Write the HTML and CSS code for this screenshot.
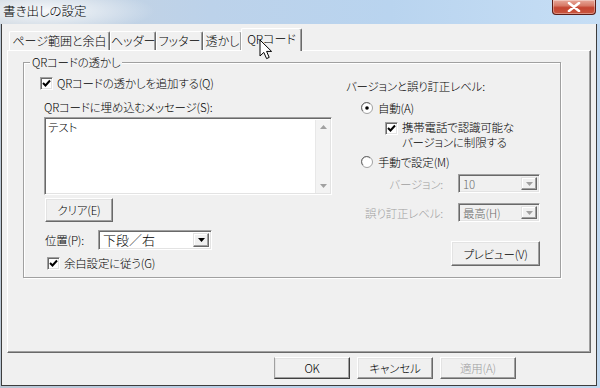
FILE: index.html
```html
<!DOCTYPE html>
<html lang="ja">
<head>
<meta charset="utf-8">
<title>書き出しの設定</title>
<link rel="stylesheet" href="styles.css">
</head>
<body>
<div class="window">
  <div class="titlebar">
    <span class="title">書き出しの設定</span>
    <div class="close">
      <svg width="14" height="10" viewBox="0 0 14 10"><path d="M2 1 L12 9 M12 1 L2 9" stroke="#fff" stroke-width="2.6" stroke-linecap="round"/></svg>
    </div>
  </div>
  <div class="client">
    <div class="tabs">
      <div class="tab t1">ページ範囲と余白</div>
      <div class="tab t2">ヘッダー</div>
      <div class="tab t3">フッター</div>
      <div class="tab t4">透かし</div>
      <div class="tab t5 active">QRコード</div>
    </div>
    <div class="pane">
      <div class="group">
        <span class="group-label">QRコードの透かし</span>
        <div class="cols">
          <div class="left">
            <div class="chk-row add-row">
              <span class="checkbox"><svg width="9" height="9" viewBox="0 0 9 9"><path d="M1 4 L3.5 6.5 L8 1.5" fill="none" stroke="#000" stroke-width="2"/></svg></span>
              <span>QRコードの透かしを追加する(Q)</span>
            </div>
            <div class="msg-label">QRコードに埋め込むメッセージ(S):</div>
            <div class="textarea">
              <div class="text">テスト</div>
              <div class="vscroll">
                <svg width="7" height="4" viewBox="0 0 7 4"><path d="M0 4 L3.5 0 L7 4Z" fill="#a0a0a0"/></svg>
                <svg width="7" height="4" viewBox="0 0 7 4"><path d="M0 0 L3.5 4 L7 0Z" fill="#a0a0a0"/></svg>
              </div>
            </div>
            <div class="btn clear-btn">クリア(E)</div>
            <div class="pos-row">
              <span class="pos-label">位置(P):</span>
              <div class="select pos-select">
                <span class="value">下段／右</span>
                <span class="drop"><svg width="7" height="4" viewBox="0 0 7 4"><path d="M0 0 L3.5 4 L7 0Z" fill="#000"/></svg></span>
              </div>
            </div>
            <div class="chk-row margin-row">
              <span class="checkbox"><svg width="9" height="9" viewBox="0 0 9 9"><path d="M1 4 L3.5 6.5 L8 1.5" fill="none" stroke="#000" stroke-width="2"/></svg></span>
              <span>余白設定に従う(G)</span>
            </div>
          </div>
          <div class="right">
            <div class="heading">バージョンと誤り訂正レベル:</div>
            <div class="radio-row auto-row">
              <span class="radio"><svg width="12" height="12" viewBox="0 0 12 12"><circle cx="6" cy="6" r="5.5" fill="#fff" stroke="#a0a0a0"/><path d="M2 9 A4.5 4.5 0 0 1 9 2" fill="none" stroke="#696969"/><circle cx="6" cy="6" r="1.8" fill="#000"/></svg></span>
              <span>自動(A)</span>
            </div>
            <div class="chk-row mobile-row">
              <span class="checkbox"><svg width="9" height="9" viewBox="0 0 9 9"><path d="M1 4 L3.5 6.5 L8 1.5" fill="none" stroke="#000" stroke-width="2"/></svg></span>
              <div class="two-line">
                <div class="line">携帯電話で認識可能な</div>
                <div class="line">バージョンに制限する</div>
              </div>
            </div>
            <div class="radio-row manual-row">
              <span class="radio"><svg width="12" height="12" viewBox="0 0 12 12"><circle cx="6" cy="6" r="5.5" fill="#fff" stroke="#a0a0a0"/><path d="M2 9 A4.5 4.5 0 0 1 9 2" fill="none" stroke="#696969"/></svg></span>
              <span>手動で設定(M)</span>
            </div>
            <div class="field-row version-row">
              <span class="field-label">バージョン:</span>
              <div class="select disabled">
                <span class="value">10</span>
                <span class="drop"><svg width="7" height="4" viewBox="0 0 7 4"><path d="M0 0 L3.5 4 L7 0Z" fill="#a0a0a0"/></svg></span>
              </div>
            </div>
            <div class="field-row level-row">
              <span class="field-label">誤り訂正レベル:</span>
              <div class="select disabled">
                <span class="value">最高(H)</span>
                <span class="drop"><svg width="7" height="4" viewBox="0 0 7 4"><path d="M0 0 L3.5 4 L7 0Z" fill="#a0a0a0"/></svg></span>
              </div>
            </div>
            <div class="btn preview-btn">プレビュー(V)</div>
          </div>
        </div>
      </div>
    </div>
    <div class="footer">
      <div class="btn footer-btn default">OK</div>
      <div class="btn footer-btn">キャンセル</div>
      <div class="btn footer-btn disabled-btn">適用(A)</div>
    </div>
  </div>
  <svg class="cursor" width="14" height="21" viewBox="0 0 14 21"><path d="M1 1 L1 17 L4.8 13.4 L7.6 19.6 L10.2 18.4 L7.6 12.4 L12.6 12.4 Z" fill="#fff" stroke="#000" stroke-width="1" stroke-linejoin="miter"/></svg>
</div>
</body>
</html>
```
FILE: styles.css
```css
* { box-sizing: border-box; }
html, body { margin: 0; padding: 0; }
body {
  width: 600px;
  height: 388px;
  overflow: hidden;
  font-family: "Noto Sans CJK JP", "Liberation Sans", sans-serif;
  font-size: 11.5px;
  font-weight: 300;
  letter-spacing: -0.2px;
  font-feature-settings: "palt";
  color: #000;
  background: #fff;
}
.window {
  position: relative;
  width: 600px;
  height: 388px;
  background: linear-gradient(90deg, #b9c6d4 0%, #b8cee6 40%, #c0d8f0 100%);
  display: flex;
  flex-direction: column;
}
.titlebar {
  height: 24px;
  display: flex;
  justify-content: space-between;
  align-items: flex-start;
  background:
    radial-gradient(ellipse 110px 22px at 45px 11px, rgba(255,255,255,0.85), rgba(255,255,255,0) 100%),
    linear-gradient(90deg, #c9d3dd 0%, #bcd2ea 35%, #b9d4ef 65%, #c6def5 100%);
}
.title {
  margin: 3px 0 0 3px;
  font-size: 12.5px;
  letter-spacing: 0;
  line-height: 16px;
  color: #000;
}
.close {
  width: 44px;
  height: 15px;
  margin: 0 4px 0 0;
  border: 1px solid #5b1d17;
  border-top: none;
  border-radius: 0 0 4px 4px;
  background: linear-gradient(180deg, #e8a99b 0%, #d77a68 40%, #c44532 55%, #c9553e 100%);
  box-shadow: inset 0 0 0 1px rgba(255,255,255,0.35);
  display: flex;
  align-items: center;
  justify-content: center;
}
.client {
  flex: 1;
  margin: 0 3px 2px 1px;
  border: 1px solid #3d3d3d;
  border-top: none;
  background: #f0f0f0;
  padding: 4px 5px 0 5px;
  display: flex;
  flex-direction: column;
}
.tabs {
  height: 22px;
  display: flex;
  align-items: flex-end;
  padding-left: 2px;
  position: relative;
  z-index: 1;
}
.tab {
  height: 19px;
  line-height: 17px;
  font-size: 12px;
  letter-spacing: 0;
  text-align: center;
  border-top: 1px solid #fff;
  border-left: 1px solid #fff;
  border-right: 1px solid #696969;
  box-shadow: inset -1px 0 0 #a0a0a0;
  border-radius: 2px 2px 0 0;
  background: #f0f0f0;
  white-space: nowrap;
}
.t1 { width: 101px; }
.t2 { width: 46px; }
.t3 { width: 47px; }
.t4 { width: 39px; }
.t5 { width: 61px; }
.tab.active {
  height: 23px;
  margin-bottom: -1px;
  line-height: 19px;
  margin-left: -1px;
}
.pane {
  height: 303px;
  border-top: 1px solid #fff;
  border-left: 1px solid #fff;
  border-right: 1px solid #696969;
  border-bottom: 1px solid #696969;
  box-shadow: inset -1px -1px 0 #a0a0a0;
  padding: 11px 0 0 15px;
}
.group {
  position: relative;
  width: 538px;
  height: 216px;
  border: 1px solid #a0a0a0;
  box-shadow: inset 1px 1px 0 #fff, 1px 1px 0 #fff;
}
.group-label {
  position: absolute;
  top: -8px;
  left: 6px;
  padding: 0 2px;
  line-height: 14px;
  background: #f0f0f0;
}
.cols {
  display: grid;
  grid-template-columns: 310px 1fr;
}
.left, .right {
  display: flex;
  flex-direction: column;
  align-items: flex-start;
}
.chk-row, .radio-row {
  display: flex;
  align-items: center;
  height: 14px;
  line-height: 14px;
  white-space: nowrap;
}
.checkbox {
  width: 13px;
  height: 13px;
  margin-right: 4px;
  background: #fff;
  border-top: 1px solid #a0a0a0;
  border-left: 1px solid #a0a0a0;
  border-right: 1px solid #fff;
  border-bottom: 1px solid #fff;
  box-shadow: inset 1px 1px 0 #696969, inset -1px -1px 0 #e3e3e3;
  display: flex;
  align-items: center;
  justify-content: center;
  flex: none;
}
.radio {
  width: 12px;
  height: 12px;
  margin-right: 5px;
  display: flex;
  flex: none;
}
.add-row { margin: 13px 0 0 16px; }
.msg-label { margin: 10px 0 0 20px; line-height: 14px; height: 14px; white-space: nowrap; }
.textarea {
  margin: 3px 0 0 20px;
  width: 288px;
  height: 78px;
  background: #fff;
  border-top: 1px solid #a0a0a0;
  border-left: 1px solid #a0a0a0;
  border-right: 1px solid #fff;
  border-bottom: 1px solid #fff;
  box-shadow: inset 1px 1px 0 #696969, inset -1px -1px 0 #e3e3e3;
  display: flex;
  padding: 2px 1px 1px 2px;
}
.text {
  flex: 1;
  line-height: 14px;
  padding-left: 1px;
}
.vscroll {
  width: 15px;
  background: #f3f3f3;
  border-left: 1px solid #e8e8e8;
  display: flex;
  flex-direction: column;
  justify-content: space-between;
  align-items: center;
  padding: 5px 0 5px;
}
.btn {
  display: flex;
  align-items: center;
  justify-content: center;
  background: #f0f0f0;
  border-top: 1px solid #fff;
  border-left: 1px solid #fff;
  border-right: 1px solid #696969;
  border-bottom: 1px solid #696969;
  box-shadow: inset -1px -1px 0 #a0a0a0, inset 1px 1px 0 #e3e3e3;
  white-space: nowrap;
  line-height: 14px;
}
.clear-btn { margin: 3px 0 0 21px; width: 68px; height: 24px; }
.pos-row {
  margin: 8px 0 0 21px;
  display: flex;
  align-items: center;
  height: 20px;
}
.pos-label { width: 53px; white-space: nowrap; }
.select {
  height: 20px;
  background: #fff;
  border-top: 1px solid #a0a0a0;
  border-left: 1px solid #a0a0a0;
  border-right: 1px solid #fff;
  border-bottom: 1px solid #fff;
  box-shadow: inset 1px 1px 0 #696969, inset -1px -1px 0 #e3e3e3;
  display: flex;
  align-items: stretch;
  padding: 2px;
}
.select .value {
  flex: 1;
  line-height: 14px;
  padding-left: 2px;
  white-space: nowrap;
}
.pos-select { width: 114px; }
.pos-select .value { font-size: 13px; letter-spacing: 0; }
.drop {
  width: 16px;
  background: #f0f0f0;
  border-top: 1px solid #e3e3e3;
  border-left: 1px solid #e3e3e3;
  border-right: 1px solid #696969;
  border-bottom: 1px solid #696969;
  box-shadow: inset -1px -1px 0 #a0a0a0, inset 1px 1px 0 #fff;
  display: flex;
  align-items: center;
  justify-content: center;
}
.select.disabled { background: #f0f0f0; width: 82px; height: 19px; }
.select.disabled .value { color: #6d6d6d; }
.margin-row { margin: 6px 0 0 23px; }
.heading { margin: 16px 0 0 12px; line-height: 14px; height: 14px; white-space: nowrap; }
.auto-row { margin: 8px 0 0 27px; }
.mobile-row {
  margin: 5px 0 0 51px;
  height: 30px;
  align-items: flex-start;
}
.mobile-row .checkbox { margin-top: 2px; }
.two-line { display: flex; flex-direction: column; }
.two-line .line { line-height: 15px; height: 15px; }
.manual-row { margin: 5px 0 0 27px; }
.field-row {
  display: flex;
  align-items: center;
  margin-left: 12px;
}
.field-label {
  width: 97px;
  margin-right: 15px;
  text-align: right;
  color: #a0a0a0;
  white-space: nowrap;
}
.version-row { margin-top: 5px; }
.level-row { margin-top: 10px; }
.preview-btn { margin: 19px 0 0 117px; width: 89px; height: 25px; }
.footer {
  display: flex;
  gap: 7px;
  margin-top: 4px;
  padding-left: 267px;
}
.footer-btn { width: 76px; height: 22px; }
.footer-btn.default { border-color: #fff #404040 #404040 #a0a0a0; }
.disabled-btn { color: #a0a0a0; }
.cursor {
  position: absolute;
  left: 259px;
  top: 39px;
  z-index: 10;
}
```
